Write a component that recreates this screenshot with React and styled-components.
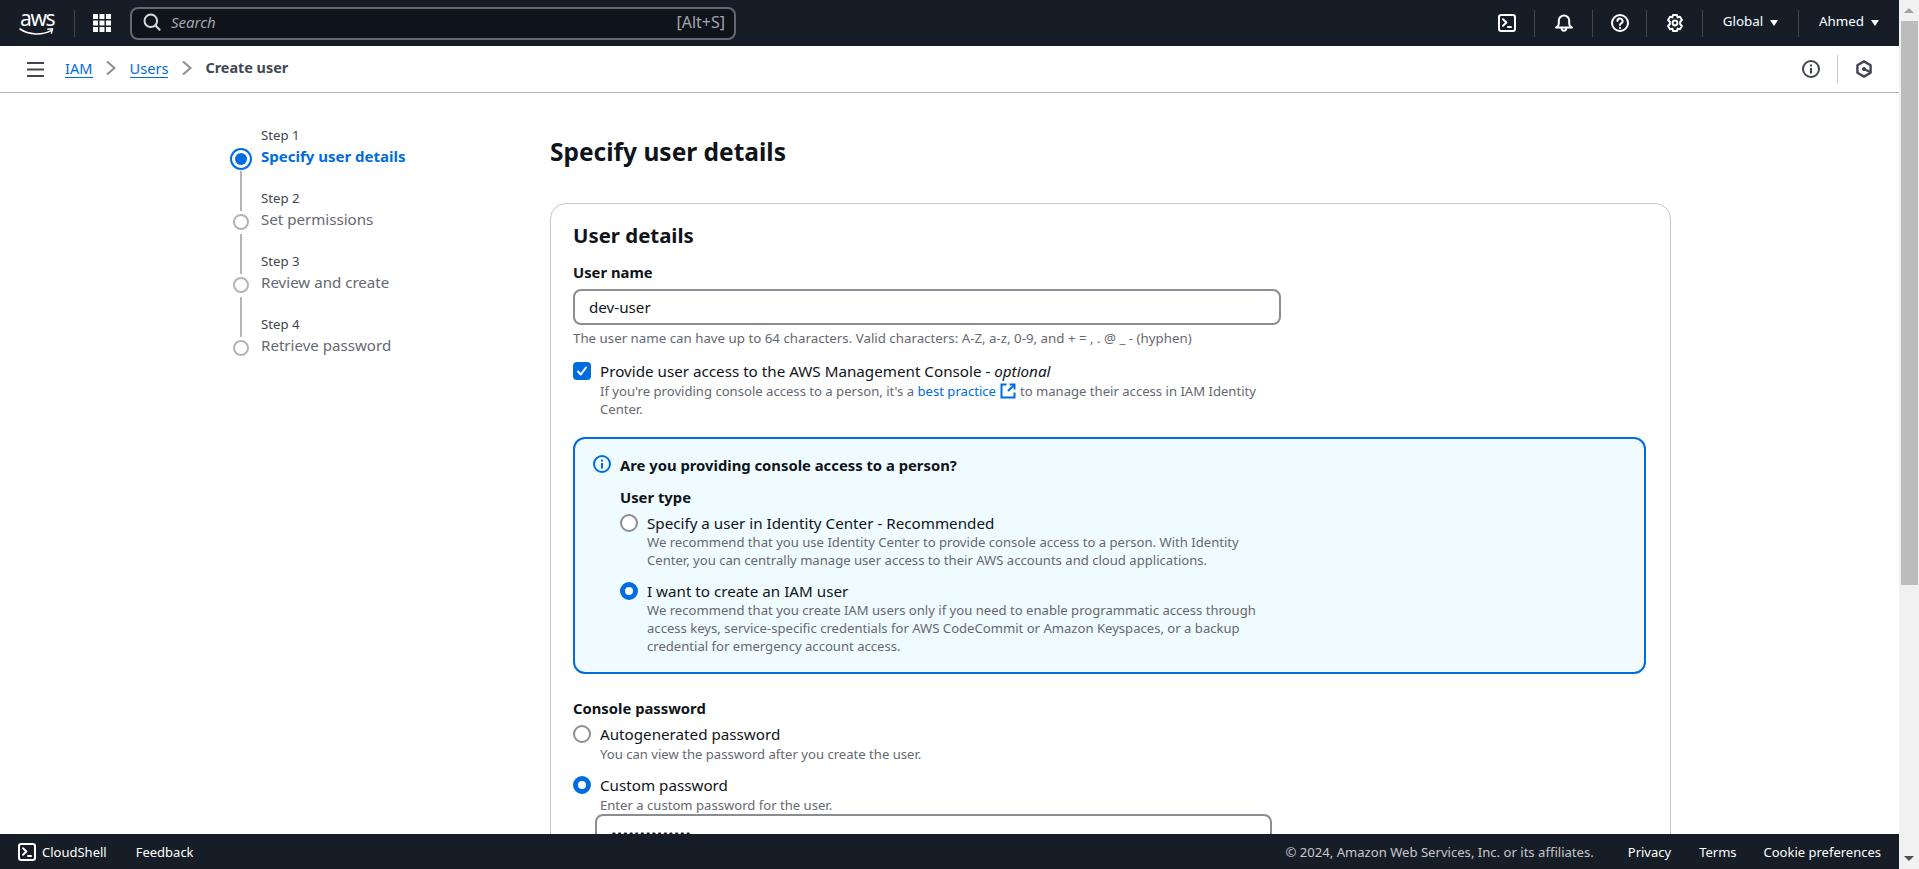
import React from "react";
import styled, { createGlobalStyle } from "styled-components";

const GlobalStyle = createGlobalStyle`
  html, body {
    margin: 0;
    padding: 0;
    height: 100%;
    overflow: hidden;
    background: #ffffff;
  }
  body {
    font-family: "Noto Sans", "Open Sans", Arial, sans-serif;
    font-size: 15.2px;
    color: #0f141a;
  }
  * {
    box-sizing: border-box;
  }
`;

const Shell = styled.div`
  display: flex;
  height: 100vh;
`;
const Column = styled.div`
  flex: 1;
  min-width: 0;
  display: flex;
  flex-direction: column;
`;

const FakeScrollbar = styled.div`
  width: 20px;
  flex: none;
  background: #f1f1f1;
  display: flex;
  flex-direction: column;
  align-items: center;
  justify-content: space-between;
`;
const ScrollArrow = styled.div`
  flex: none;
  height: 21px;
  display: flex;
  align-items: center;
  justify-content: center;
  &::before {
    content: "";
    border-left: 5px solid transparent;
    border-right: 5px solid transparent;
    ${(p) => (p.$down ? "border-top: 5px solid #505050;" : "border-bottom: 5px solid #a3a3a3;")}
  }
`;
const ScrollThumb = styled.div`
  width: 17px;
  height: 564px;
  background: #bcbcbc;
  margin-bottom: auto;
`;

const TopBar = styled.header`
  height: 46px;
  flex: none;
  background: #161d26;
  display: flex;
  align-items: center;
  color: #ffffff;
`;
const LogoBox = styled.div`
  width: 74px;
  flex: none;
  padding-left: 19px;
  display: flex;
  flex-direction: column;
  gap: 1px;
`;
const LogoWord = styled.span`
  font-size: 21px;
  line-height: 15px;
  letter-spacing: -1.4px;
  height: 16px;
  margin-left: 1px;
  color: #ffffff;
`;
const TopDivider = styled.div`
  width: 1px;
  height: 27px;
  background: #424650;
  flex: none;
`;
const GridButton = styled.div`
  width: 55px;
  flex: none;
  display: flex;
  justify-content: center;
  padding-right: 2px;
`;
const SearchBox = styled.div`
  width: 606px;
  height: 33px;
  flex: none;
  background: #0f141a;
  border: 2px solid #656871;
  border-radius: 8px;
  display: flex;
  align-items: center;
  padding: 0 9px 2px 11px;
  gap: 10px;
`;
const SearchText = styled.span`
  font-style: italic;
  font-size: 15px;
  color: #a4a4ad;
  flex: 1;
`;
const SearchKey = styled.span`
  font-size: 16px;
  color: #a4a4ad;
`;
const TopRight = styled.div`
  margin-left: auto;
  display: flex;
  align-items: center;
  height: 100%;
`;
const TopIcon = styled.div`
  width: ${(p) => p.$w}px;
  flex: none;
  display: flex;
  justify-content: center;
`;
const TopMenu = styled.div`
  width: ${(p) => p.$w}px;
  flex: none;
  display: flex;
  align-items: center;
  justify-content: center;
  gap: 7px;
  font-size: 13.4px;
  color: #ffffff;
  padding-bottom: 4px;
`;
const Caret = styled.span`
  width: 0;
  height: 0;
  margin-top: 3px;
  border-left: 4.5px solid transparent;
  border-right: 4.5px solid transparent;
  border-top: 6px solid #ffffff;
`;

const SubBar = styled.div`
  height: 47px;
  flex: none;
  background: #ffffff;
  border-bottom: 1px solid #b4b4bb;
  display: flex;
  align-items: center;
  padding-left: 27px;
  padding-right: 27px;
`;
const Crumbs = styled.nav`
  display: flex;
  align-items: center;
  margin-left: 21px;
  padding-bottom: 2px;
  font-size: 14.6px;
`;
const CrumbLink = styled.a`
  color: #006ce0;
  border-bottom: 1px solid #006ce0;
  line-height: 18px;
`;
const CrumbCurrent = styled.span`
  color: #424650;
  font-size: 14.4px;
  font-weight: 700;
  line-height: 18px;
`;
const CrumbSep = styled.span`
  display: flex;
  width: 37px;
  justify-content: center;
`;
const SubRight = styled.div`
  margin-left: auto;
  display: flex;
  align-items: center;
`;
const SubDivider = styled.div`
  width: 1px;
  height: 28px;
  background: #c6c6cd;
  margin: 0 18px 0 17px;
`;

const Content = styled.div`
  flex: 1;
  min-height: 0;
  overflow: hidden;
  display: flex;
  padding-left: 229px;
  background: #ffffff;
`;

const StepsNav = styled.ol`
  list-style: none;
  margin: 0;
  padding: 32px 0 0;
  width: 321px;
  flex: none;
`;
const Step = styled.li`
  display: flex;
  height: ${(p) => (p.$first ? 42 : 63)}px;
  gap: 8px;
`;
const Rail = styled.div`
  width: 24px;
  flex: none;
  display: flex;
  flex-direction: column;
  align-items: center;
  justify-content: flex-end;
`;
const Connector = styled.div`
  width: 2px;
  height: 40px;
  background: #b4b4bb;
  margin-bottom: 3px;
  flex: none;
`;
const Dot = styled.div`
  width: 16px;
  height: 16px;
  border-radius: 50%;
  border: 2px solid #b4b4bb;
  flex: none;
`;
const ActiveDot = styled.div`
  width: 22px;
  height: 22px;
  border-radius: 50%;
  border: 2px solid #006ce0;
  flex: none;
  margin-bottom: -3px;
  display: flex;
  align-items: center;
  justify-content: center;
  &::before {
    content: "";
    width: 12px;
    height: 12px;
    border-radius: 50%;
    background: #006ce0;
  }
`;
const StepText = styled.div`
  display: flex;
  flex-direction: column;
  justify-content: flex-end;
  padding-bottom: 1px;
`;
const StepSmall = styled.div`
  font-size: 13.2px;
  line-height: 16px;
  margin-bottom: 3px;
  color: #424650;
`;
const StepLabel = styled.div`
  font-size: ${(p) => (p.$active ? 15 : 15.1)}px;
  line-height: 20px;
  font-weight: ${(p) => (p.$active ? 700 : 400)};
  color: ${(p) => (p.$active ? "#006ce0" : "#656871")};
`;

const Main = styled.main`
  width: 1121px;
  flex: none;
  padding-top: 42px;
`;
const PageTitle = styled.h1`
  margin: 0 0 34px;
  font-size: 24.5px;
  line-height: 34px;
  font-weight: 700;
  color: #0f141a;
`;
const Card = styled.section`
  border: 1px solid #c6c6cd;
  border-radius: 16px;
  padding: 17px 24px 24px 22px;
`;
const CardTitle = styled.h2`
  margin: 0 0 13px;
  font-size: 20.4px;
  line-height: 28px;
  font-weight: 700;
`;
const FieldLabel = styled.div`
  font-size: 14.8px;
  line-height: 20px;
  font-weight: 700;
`;
const TextInput = styled.input`
  display: block;
  width: ${(p) => p.$w}px;
  height: 36px;
  margin-top: ${(p) => p.$mt || 0}px;
  border: 2px solid #8c8c94;
  border-radius: 8px;
  padding: 0 14px;
  font: inherit;
  font-size: 15.2px;
  color: #0f141a;
  background: #ffffff;
  outline: none;
`;
const PasswordInput = styled(TextInput)`
  padding-top: 3px;
`;
const FieldHelp = styled.div`
  font-size: 13.3px;
  line-height: 16px;
  color: #656871;
  margin-top: 5px;
`;

const CheckRow = styled.div`
  display: flex;
  gap: 9px;
  margin-top: 16px;
`;
const CheckBox = styled.div`
  width: 18px;
  height: 18px;
  flex: none;
  border-radius: 4px;
  background: #006ce0;
  display: flex;
  align-items: center;
  justify-content: center;
`;
const OptionLabel = styled.div`
  font-size: 15.2px;
  line-height: 18px;
  color: #0f141a;
`;
const OptionDesc = styled.div`
  font-size: 13.1px;
  line-height: ${(p) => p.$lh || 18}px;
  color: #656871;
  max-width: ${(p) => p.$w || 625}px;
  margin-top: ${(p) => p.$mt ?? 1}px;
`;
const InlineLink = styled.a`
  color: #006ce0;
`;
const ExternalIcon = styled.svg`
  vertical-align: -3px;
  margin: 0 4px;
`;

const Alert = styled.div`
  width: 1073px;
  height: 237px;
  margin-top: 19px;
  border: 2px solid #006ce0;
  border-radius: 12px;
  background: #f0fbff;
  padding: 16px 18px;
  display: flex;
  gap: 9px;
`;
const AlertBody = styled.div`
  flex: 1;
`;
const AlertTitle = styled.div`
  font-size: 14.8px;
  line-height: 20px;
  font-weight: 700;
`;
const GroupLabel = styled.div`
  font-size: 14.8px;
  line-height: 20px;
  font-weight: 700;
  margin-top: ${(p) => p.$mt || 0}px;
`;
const RadioRow = styled.div`
  display: flex;
  gap: 9px;
  margin-top: ${(p) => p.$mt || 0}px;
`;
const Radio = styled.div`
  width: 18px;
  height: 18px;
  flex: none;
  border-radius: 50%;
  background: #ffffff;
  border: ${(p) => (p.$on ? "5px solid #006ce0" : "2px solid #8c8c94")};
`;
const PasswordBlock = styled.div`
  margin-left: 22px;
`;

const Footer = styled.footer`
  height: 35px;
  flex: none;
  background: #161d26;
  color: #ffffff;
  display: flex;
  align-items: center;
  font-size: 13px;
  padding-left: 18px;
  padding-right: 18px;
`;
const FooterLink = styled.span`
  color: #ffffff;
  margin-left: ${(p) => p.$ml || 0}px;
`;
const FooterNote = styled.span`
  margin-left: auto;
  font-size: 13.1px;
  color: #c6c6cd;
`;

const AwsSmile = () => (
  <svg width="35" height="8" viewBox="0 0 35 8" fill="none" style={{ display: "block" }}>
    <path d="M1 1c9 6.2 22 6.4 31 1.6" stroke="#fff" strokeWidth="1.6" strokeLinecap="round" />
    <path d="M28.8 1.2l4.8-.5-1.2 4.4" stroke="#fff" strokeWidth="1.4" strokeLinecap="round" strokeLinejoin="round" />
  </svg>
);

const GridIcon = () => (
  <svg width="18" height="18" viewBox="0 0 18 18" fill="#fff">
    {[0, 6.5, 13].flatMap((x) =>
      [0, 6.5, 13].map((y) => <rect key={`${x}-${y}`} x={x} y={y} width="5" height="5" />)
    )}
  </svg>
);

const SearchIcon = () => (
  <svg width="18" height="18" viewBox="0 0 18 18" fill="none" stroke="#d5dbdb" strokeWidth="2" strokeLinecap="round">
    <circle cx="7.8" cy="7.8" r="6.3" />
    <path d="M12.5 12.5L16.6 16.8" />
  </svg>
);

const TerminalIcon = ({ size = 18 }) => (
  <svg width={size} height={size} viewBox="0 0 18 18" fill="none" stroke="#fff" strokeWidth="2" strokeLinecap="round" strokeLinejoin="round">
    <rect x="1" y="1" width="16" height="16" rx="2.2" />
    <path d="M5 5.3l3.4 3.2L5 11.7" />
    <path d="M10 13h3" />
  </svg>
);

const BellIcon = () => (
  <svg width="18" height="18" viewBox="0 0 18 18" fill="none" stroke="#fff" strokeWidth="2" strokeLinejoin="round">
    <path d="M1 13.6c1.6-.9 2.8-1.7 2.8-3.6V6.6a5.2 5.2 0 0 1 10.4 0V10c0 1.9 1.2 2.7 2.8 3.6z" />
    <path d="M6.6 14c0 3.6 4.8 3.6 4.8 0" />
  </svg>
);

const HelpIcon = () => (
  <svg width="18" height="18" viewBox="0 0 18 18" fill="none" stroke="#fff" strokeWidth="2" strokeLinecap="round">
    <circle cx="9" cy="9" r="8" />
    <path d="M6.4 7a2.6 2.6 0 1 1 3.8 2.4c-.8.4-1.2.9-1.2 1.7" />
    <path d="M9 13.8v.1" />
  </svg>
);

const GearIcon = () => (
  <svg width="18" height="18" viewBox="0 0 18 18" fill="none" stroke="#fff" strokeWidth="2" strokeLinejoin="round">
    <path d="M7 1h4l.6 2.4 2.3-.7 2 3.4-1.7 1.7v2.4l1.7 1.7-2 3.4-2.3-.7L11 17H7l-.6-2.4-2.3.7-2-3.4 1.7-1.7V7.8L2.1 6.1l2-3.4 2.3.7z" />
    <circle cx="9" cy="9" r="2.4" />
  </svg>
);

const MenuIcon = () => (
  <svg width="17" height="15" viewBox="0 0 17 15" fill="#424650" style={{ display: "block" }}>
    <rect y="0" width="17" height="2" />
    <rect y="6.5" width="17" height="2" />
    <rect y="13" width="17" height="2" />
  </svg>
);

const ChevronIcon = () => (
  <svg width="10" height="16" viewBox="0 0 10 16" fill="none" stroke="#8c8c94" strokeWidth="2">
    <path d="M1 1.5l7.5 6.5L1 14.5" />
  </svg>
);

const InfoIcon = ({ color = "#424650", size = 18 }) => (
  <svg width={size} height={size} viewBox="0 0 18 18" fill="none" stroke={color} strokeWidth="2" style={{ flex: "none", display: "block" }}>
    <circle cx="9" cy="9" r="8" />
    <path d="M9 8v5.5" />
    <path d="M9 4.6v2" />
  </svg>
);

const HexIcon = () => (
  <svg width="16" height="18" viewBox="0 0 16 18" fill="none" stroke="#424650" strokeWidth="2.4" strokeLinejoin="round" style={{ display: "block" }}>
    <path d="M8 1.4l6.6 3.8v7.6L8 16.6l-6.6-3.8V5.2z" />
    <circle cx="8" cy="9" r="1.6" fill="#424650" strokeWidth="1" />
    <path d="M8 9l6 3" strokeWidth="2" />
  </svg>
);

const steps = ["Set permissions", "Review and create", "Retrieve password"];

const App = () => (
  <Shell>
    <GlobalStyle />
    <Column>
      <TopBar>
        <LogoBox>
          <LogoWord>aws</LogoWord>
          <AwsSmile />
        </LogoBox>
        <TopDivider />
        <GridButton>
          <GridIcon />
        </GridButton>
        <SearchBox>
          <SearchIcon />
          <SearchText>Search</SearchText>
          <SearchKey>[Alt+S]</SearchKey>
        </SearchBox>
        <TopRight>
          <TopIcon $w={54}>
            <TerminalIcon />
          </TopIcon>
          <TopDivider />
          <TopIcon $w={57}>
            <BellIcon />
          </TopIcon>
          <TopDivider />
          <TopIcon $w={53}>
            <HelpIcon />
          </TopIcon>
          <TopDivider />
          <TopIcon $w={55}>
            <GearIcon />
          </TopIcon>
          <TopDivider />
          <TopMenu $w={95}>
            Global <Caret />
          </TopMenu>
          <TopDivider />
          <TopMenu $w={100}>
            Ahmed <Caret />
          </TopMenu>
        </TopRight>
      </TopBar>

      <SubBar>
        <MenuIcon />
        <Crumbs>
          <CrumbLink>IAM</CrumbLink>
          <CrumbSep>
            <ChevronIcon />
          </CrumbSep>
          <CrumbLink>Users</CrumbLink>
          <CrumbSep>
            <ChevronIcon />
          </CrumbSep>
          <CrumbCurrent>Create user</CrumbCurrent>
        </Crumbs>
        <SubRight>
          <InfoIcon />
          <SubDivider />
          <HexIcon />
        </SubRight>
      </SubBar>

      <Content>
        <StepsNav>
          <Step $first>
            <Rail>
              <ActiveDot />
            </Rail>
            <StepText>
              <StepSmall>Step 1</StepSmall>
              <StepLabel $active>Specify user details</StepLabel>
            </StepText>
          </Step>
          {steps.map((label, i) => (
            <Step key={label}>
              <Rail>
                <Connector />
                <Dot />
              </Rail>
              <StepText>
                <StepSmall>Step {i + 2}</StepSmall>
                <StepLabel>{label}</StepLabel>
              </StepText>
            </Step>
          ))}
        </StepsNav>

        <Main>
          <PageTitle>Specify user details</PageTitle>
          <Card>
            <CardTitle>User details</CardTitle>
            <FieldLabel>User name</FieldLabel>
            <TextInput $w={708} $mt={7} defaultValue="dev-user" />
            <FieldHelp>
              The user name can have up to 64 characters. Valid characters: A-Z, a-z, 0-9, and + = , . @ _ - (hyphen)
            </FieldHelp>

            <CheckRow>
              <CheckBox>
                <svg width="12" height="12" viewBox="0 0 12 12" fill="none" stroke="#fff" strokeWidth="2" strokeLinecap="round" strokeLinejoin="round">
                  <path d="M2 6.5l2.8 3L10 2.5" />
                </svg>
              </CheckBox>
              <div>
                <OptionLabel>
                  Provide user access to the AWS Management Console - <em>optional</em>
                </OptionLabel>
                <OptionDesc $w={675} $mt={3} $lh={17.6}>
                  If you're providing console access to a person, it's a <InlineLink>best practice</InlineLink>
                  <ExternalIcon width="16" height="16" viewBox="0 0 16 16" fill="none" stroke="#006ce0" strokeWidth="2">
                    <path d="M6.5 1.5H1.5v13h13v-5" />
                    <path d="M9.5 1.5h5v5" />
                    <path d="M14 2L8 8" />
                  </ExternalIcon>
                  to manage their access in IAM Identity Center.
                </OptionDesc>
              </div>
            </CheckRow>

            <Alert>
              <InfoIcon color="#006ce0" />
              <AlertBody>
                <AlertTitle>Are you providing console access to a person?</AlertTitle>
                <GroupLabel $mt={12}>User type</GroupLabel>
                <RadioRow $mt={7}>
                  <Radio />
                  <div>
                    <OptionLabel>Specify a user in Identity Center - Recommended</OptionLabel>
                    <OptionDesc>
                      We recommend that you use Identity Center to provide console access to a person. With Identity
                      Center, you can centrally manage user access to their AWS accounts and cloud applications.
                    </OptionDesc>
                  </div>
                </RadioRow>
                <RadioRow $mt={13}>
                  <Radio $on />
                  <div>
                    <OptionLabel>I want to create an IAM user</OptionLabel>
                    <OptionDesc>
                      We recommend that you create IAM users only if you need to enable programmatic access through
                      access keys, service-specific credentials for AWS CodeCommit or Amazon Keyspaces, or a backup
                      credential for emergency account access.
                    </OptionDesc>
                  </div>
                </RadioRow>
              </AlertBody>
            </Alert>

            <GroupLabel $mt={24}>Console password</GroupLabel>
            <RadioRow $mt={7}>
              <Radio />
              <div>
                <OptionLabel>Autogenerated password</OptionLabel>
                <OptionDesc $mt={3} $lh={17.6}>You can view the password after you create the user.</OptionDesc>
              </div>
            </RadioRow>
            <RadioRow $mt={12}>
              <Radio $on />
              <div>
                <OptionLabel>Custom password</OptionLabel>
                <OptionDesc $mt={3} $lh={17.6}>Enter a custom password for the user.</OptionDesc>
              </div>
            </RadioRow>
            <PasswordBlock>
              <PasswordInput $w={677} type="password" defaultValue="Dev-user-20245" />
            </PasswordBlock>
          </Card>
        </Main>
      </Content>

      <Footer>
        <TerminalIcon />
        <FooterLink $ml={6}>CloudShell</FooterLink>
        <FooterLink $ml={29}>Feedback</FooterLink>
        <FooterNote>© 2024, Amazon Web Services, Inc. or its affiliates.</FooterNote>
        <FooterLink $ml={34}>Privacy</FooterLink>
        <FooterLink $ml={28}>Terms</FooterLink>
        <FooterLink $ml={27}>Cookie preferences</FooterLink>
      </Footer>
    </Column>
    <FakeScrollbar>
      <ScrollArrow />
      <ScrollThumb />
      <ScrollArrow $down />
    </FakeScrollbar>
  </Shell>
);

export default App;
